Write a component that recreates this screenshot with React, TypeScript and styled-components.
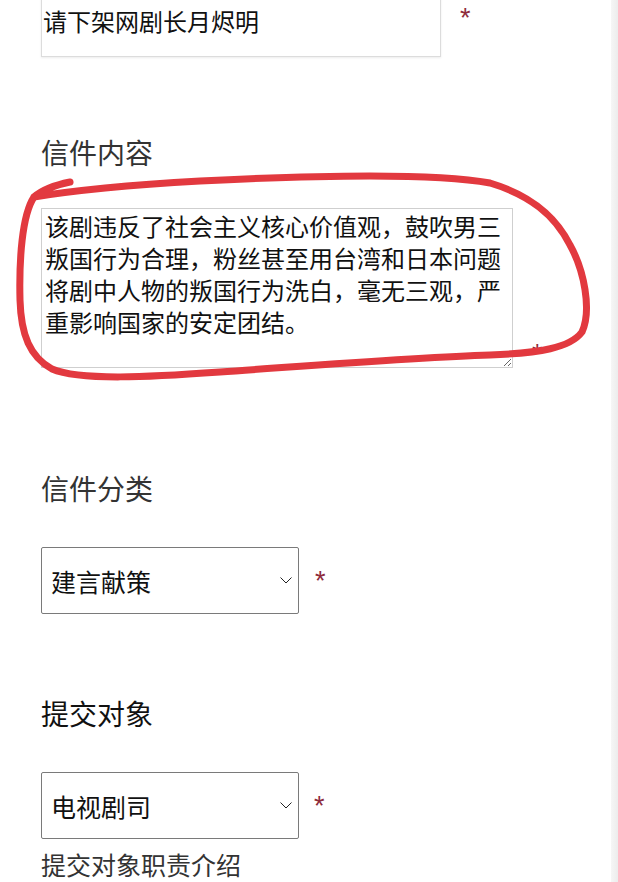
import React from 'react';
import styled, { createGlobalStyle } from 'styled-components';

const CJK = '"Noto Sans CJK SC", "Noto Sans", sans-serif';

const GlobalStyle = createGlobalStyle`
  html, body {
    margin: 0;
    padding: 0;
    background: #ffffff;
    overflow: hidden;
  }
  body {
    font-family: ${CJK};
  }
`;

const content =
  '该剧违反了社会主义核心价值观，鼓吹男三叛国行为合理，粉丝甚至用台湾和日本问题将剧中人物的叛国行为洗白，毫无三观，严重影响国家的安定团结。';

export default function App() {
  return (
    <>
      <GlobalStyle />
      <Screen>
        <Page>
          <FieldRow $offset={-10}>
            <TitleInput>请下架网剧长月烬明</TitleInput>
            <Required $shift={-10} $gap={19}>*</Required>
          </FieldRow>

          <Label $gap={75}>信件内容</Label>
          <FieldRow $offset={36} $align="flex-end">
            <ContentArea defaultValue={content} readOnly />
            <Required $shift={-9} $gap={19}>*</Required>
          </FieldRow>

          <Label $gap={100}>信件分类</Label>
          <FieldRow $offset={39}>
            <SelectBox>
              <span>建言献策</span>
              <Chevron />
            </SelectBox>
            <Required $shift={-4} $gap={16}>*</Required>
          </FieldRow>

          <Label $gap={79} $strong>
            提交对象
          </Label>
          <FieldRow $offset={39}>
            <SelectBox>
              <span>电视剧司</span>
              <Chevron />
            </SelectBox>
            <Required $shift={-4} $gap={15}>*</Required>
          </FieldRow>

          <Hint>提交对象职责介绍</Hint>

          {/* hand-drawn red circle around the letter body */}
          <Scribble viewBox="0 0 618 882" aria-hidden>
            <path
              d="M 70 182
                 C 55 185, 42 190, 34 197
                 C 22 215, 19 260, 20 300
                 C 21 335, 30 357, 52 369
                 C 80 381, 150 377, 220 372
                 C 320 365, 420 357, 490 355
                 C 540 353, 570 348, 582 332
                 C 592 310, 584 270, 570 245
                 C 555 215, 530 195, 490 183
                 C 430 172, 300 176, 200 181
                 C 130 185, 70 191, 34 197"
              fill="none"
              stroke="#e2393f"
              strokeWidth={7}
              strokeLinecap="round"
              strokeLinejoin="round"
            />
          </Scribble>
        </Page>
        <ScrollTrack />
      </Screen>
    </>
  );
}

function Chevron() {
  return (
    <svg width="12" height="7" viewBox="0 0 12 7">
      <polyline
        points="0.5,0.5 6,6 11.5,0.5"
        fill="none"
        stroke="#222"
        strokeWidth="1"
      />
    </svg>
  );
}

const Screen = styled('div')`
  display: flex;
  width: 618px;
  height: 882px;
  overflow: hidden;
`;

const Page = styled('main')`
  position: relative;
  flex: 1;
  display: flex;
  flex-direction: column;
  align-items: flex-start;
  padding-left: 41px;
`;

const ScrollTrack = styled('div')`
  width: 7px;
  background: linear-gradient(to right, #f6f6f6, #ececec);
`;

const FieldRow = styled('div')<{ $offset: number; $align?: string }>`
  display: flex;
  align-items: ${(p) => p.$align || 'center'};
  margin-top: ${(p) => p.$offset}px;
`;

const Required = styled('span')<{ $shift: number; $gap: number }>`
  margin-left: ${(p) => p.$gap}px;
  font-family: "Liberation Sans", sans-serif;
  font-size: 27px;
  line-height: 27px;
  height: 18px;
  overflow: visible;
  color: #8e2b3b;
  transform: translateY(${(p) => p.$shift}px);
`;

const TitleInput = styled('div')`
  box-sizing: border-box;
  width: 400px;
  height: 67px;
  padding: 14px 0 0 1px;
  border: 1px solid #dcdcdc;
  box-shadow: 0 1px 2px rgba(0, 0, 0, 0.08);
  font-size: 24px;
  line-height: 32px;
  color: #111;
`;

const Label = styled('div')<{ $gap: number; $strong?: boolean }>`
  margin-top: ${(p) => p.$gap}px;
  font-size: 28px;
  line-height: 40px;
  color: ${(p) => (p.$strong ? '#111' : '#333')};
  font-weight: 400;
`;

const ContentArea = styled('textarea')`
  box-sizing: border-box;
  width: 472px;
  height: 160px;
  margin: 0;
  padding: 1px 3px;
  border: 1px solid #cfcfcf;
  font-family: ${CJK};
  font-size: 24px;
  line-height: 32px;
  color: #111;
  background: #fff;
  outline: none;
  overflow: hidden;
`;

const SelectBox = styled('div')`
  box-sizing: border-box;
  display: flex;
  align-items: center;
  justify-content: space-between;
  width: 258px;
  height: 67px;
  padding: 0 6px 0 9px;
  border: 1px solid #7a7a7a;
  border-radius: 2px;
  font-size: 25px;
  color: #111;
`;

const Hint = styled('div')`
  margin-top: 8px;
  font-size: 25px;
  line-height: 34px;
  color: #333;
`;

const Scribble = styled('svg')`
  position: absolute;
  top: 0;
  left: 0;
  width: 618px;
  height: 882px;
  pointer-events: none;
`;
